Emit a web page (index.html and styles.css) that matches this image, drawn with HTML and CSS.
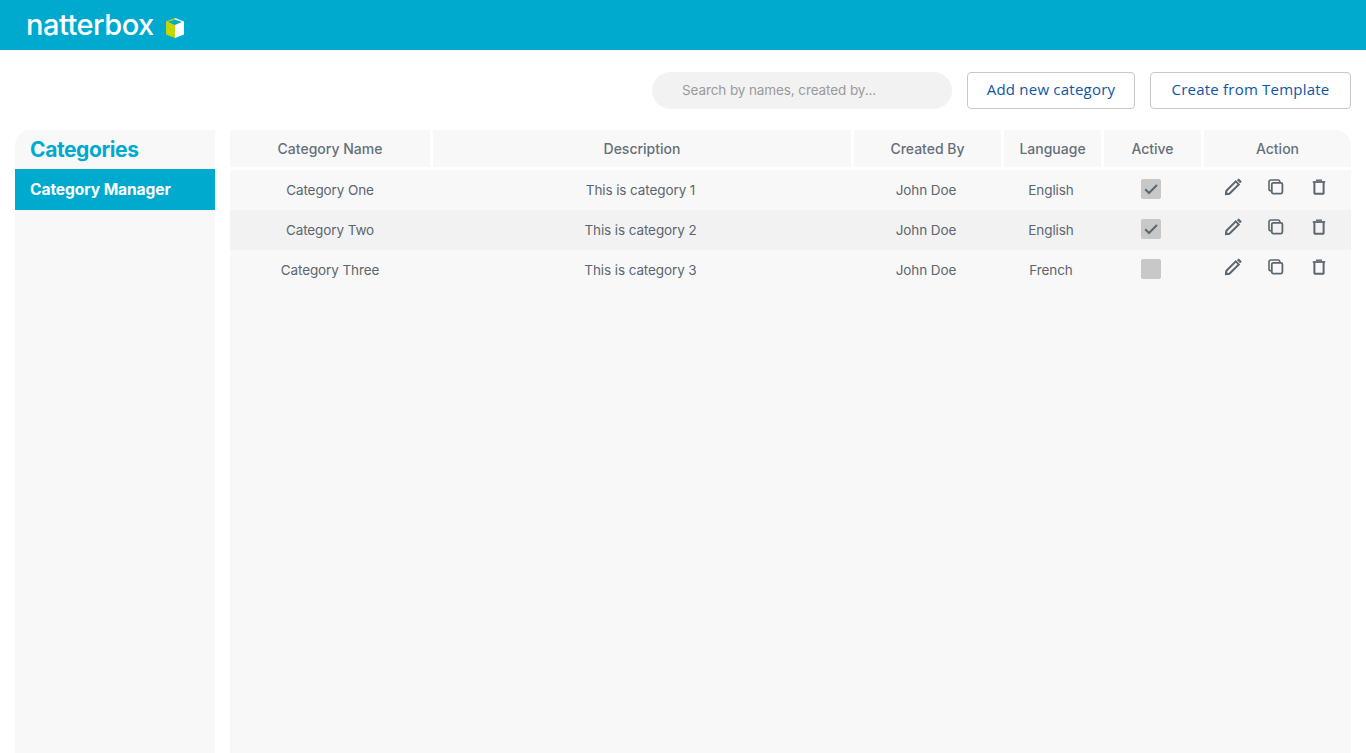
FILE: index.html
```html
<!DOCTYPE html>
<html lang="en">
<head>
    <meta charset="UTF-8">
    <title>Categories</title>
    <link rel="stylesheet" href="styles.css">
</head>
<body>
<svg class="defs" width="0" height="0">
    <symbol id="i-pencil" viewBox="0 0 20 20">
        <path d="M3.400 13.800 12.800 4.400 15.800 7.400 6.400 16.800 3 17.200Z" fill="none" stroke="currentColor" stroke-width="2"/>
        <path d="M14.200 3 15.800 1.800 18.400 4.400 17.200 6Z" fill="currentColor" stroke="currentColor" stroke-width=".6"/>
        <path d="M2.200 18 2.800 14.200 6 17.400Z" fill="currentColor"/>
    </symbol>
    <symbol id="i-copy" viewBox="0 0 20 20">
        <path d="M5.200 13.700H4.800A1.800 1.800 0 0 1 3 11.900V5A2 2 0 0 1 5 3H12A1.800 1.800 0 0 1 13.800 4.800V5.400" fill="none" stroke="currentColor" stroke-width="1.600"/>
        <rect x="5.800" y="5.800" width="10.600" height="10.800" rx="1.500" fill="none" stroke="currentColor" stroke-width="1.800"/>
    </symbol>
    <symbol id="i-trash" viewBox="0 0 20 20">
        <path d="M5.400 5.500V16A.8.800 0 0 0 6.200 16.800H13.800A.8.800 0 0 0 14.600 16V5.500" fill="none" stroke="currentColor" stroke-width="2"/>
        <path d="M3.800 5H16.200" stroke="currentColor" stroke-width="1.800"/>
        <path d="M7 3.200H13" stroke="currentColor" stroke-width="1.400"/>
    </symbol>
</svg>

<header class="topbar">
    <span class="logo-text">natterbox</span>
    <svg class="logo-cube" width="20" height="22" viewBox="0 0 20 22">
        <path d="M1 4.500 10 1V21L1 17.500Z" fill="#c4d600"/>
        <path d="M19 4.500 10 1V21L19 17.500Z" fill="#fff"/>
        <path d="M3 5 10 2.600 17 5 10 8Z" fill="#00aacf"/>
    </svg>
</header>

<div class="toolbar">
    <input class="search" type="text" placeholder="Search by names, created by...">
    <button class="btn btn-add">Add new category</button>
    <button class="btn btn-template">Create from Template</button>
</div>

<main class="content">
    <aside class="sidebar">
        <h2 class="sidebar-title">Categories</h2>
        <a class="sidebar-item">Category Manager</a>
    </aside>

    <section class="grid">
        <div class="row head">
            <div class="cell">Category Name</div>
            <div class="cell">Description</div>
            <div class="cell">Created By</div>
            <div class="cell">Language</div>
            <div class="cell">Active</div>
            <div class="cell">Action</div>
        </div>
        <div class="row">
            <div class="cell">Category One</div>
            <div class="cell">This is category 1</div>
            <div class="cell">John Doe</div>
            <div class="cell">English</div>
            <div class="cell"><span class="check"><svg width="14" height="12" viewBox="0 0 14 12"><path d="M1.200 6.200 5 10 13 2" fill="none" stroke="#5c6670" stroke-width="2"/></svg></span></div>
            <div class="cell actions">
                <svg class="icon"><use href="#i-pencil"/></svg>
                <svg class="icon"><use href="#i-copy"/></svg>
                <svg class="icon"><use href="#i-trash"/></svg>
            </div>
        </div>
        <div class="row alt">
            <div class="cell">Category Two</div>
            <div class="cell">This is category 2</div>
            <div class="cell">John Doe</div>
            <div class="cell">English</div>
            <div class="cell"><span class="check"><svg width="14" height="12" viewBox="0 0 14 12"><path d="M1.200 6.200 5 10 13 2" fill="none" stroke="#5c6670" stroke-width="2"/></svg></span></div>
            <div class="cell actions">
                <svg class="icon"><use href="#i-pencil"/></svg>
                <svg class="icon"><use href="#i-copy"/></svg>
                <svg class="icon"><use href="#i-trash"/></svg>
            </div>
        </div>
        <div class="row">
            <div class="cell">Category Three</div>
            <div class="cell">This is category 3</div>
            <div class="cell">John Doe</div>
            <div class="cell">French</div>
            <div class="cell"><span class="check"></span></div>
            <div class="cell actions">
                <svg class="icon"><use href="#i-pencil"/></svg>
                <svg class="icon"><use href="#i-copy"/></svg>
                <svg class="icon"><use href="#i-trash"/></svg>
            </div>
        </div>
    </section>
</main>
</body>
</html>
```

FILE: styles.css
```css
* {
    box-sizing: border-box;
}

html, body {
    height: 100%;
}

body {
    margin: 0;
    display: flex;
    flex-direction: column;
    overflow: hidden;
    background-color: #fff;
    color: #5c6670;
    font-family: "Inter", "Liberation Sans", sans-serif;
    font-size: 13.5px;
    letter-spacing: -.1px;
}

.defs {
    position: absolute;
}

.topbar {
    display: flex;
    align-items: center;
    flex: none;
    height: 50px;
    padding-left: 26px;
    background-color: #00aacf;
}

.logo-text {
    width: 129px;
    color: #fff;
    font-family: "Inter", sans-serif;
    font-size: 29px;
    font-weight: 500;
    line-height: 50px;
    letter-spacing: -.5px;
}

.logo-cube {
    margin-left: 10px;
    margin-top: 5px;
}

.toolbar {
    display: flex;
    justify-content: flex-end;
    flex: none;
    gap: 15px;
    padding: 22px 15px 21px;
}

.search {
    width: 300px;
    height: 37px;
    padding: 0 30px 2px;
    border: 0;
    border-radius: 19px;
    outline: none;
    background-color: #f3f2f2;
    font-family: "Inter", sans-serif;
    font-size: 13.5px;
    letter-spacing: -.1px;
}

.search::placeholder {
    color: #9a9a9a;
    opacity: 1;
}

.btn {
    height: 37px;
    padding: 0 0 4px;
    border: 1px solid #c8c8c8;
    border-radius: 4px;
    background-color: #fff;
    color: #0d56a6;
    font-family: "Open Sans", sans-serif;
    font-size: 15px;
    letter-spacing: .22px;
}

.btn-add {
    width: 168px;
}

.btn-template {
    width: 201px;
}

.content {
    display: flex;
    flex: 1;
    gap: 15px;
    padding: 0 15px;
    min-height: 0;
}

.sidebar {
    flex: none;
    width: 200px;
    border-top-left-radius: 15px;
    background-color: #f8f8f8;
}

.sidebar-title {
    margin: 0;
    padding: 0 15px;
    height: 39px;
    color: #00aacf;
    font-size: 21px;
    font-weight: 700;
    line-height: 40px;
    letter-spacing: -.4px;
}

.sidebar-item {
    display: block;
    height: 41px;
    padding: 0 15px;
    background-color: #00aacf;
    color: #fff;
    font-size: 15.6px;
    font-weight: 700;
    line-height: 41px;
}

.grid {
    flex: 1;
    background-color: #f8f8f8;
}

.row {
    display: grid;
    grid-template-columns: 200px 421px 150px 100px 100px 150px;
    height: 40px;
}

.row.alt {
    background-color: #f3f2f2;
}

.cell {
    display: flex;
    align-items: center;
    justify-content: center;
}

.head {
    height: 40px;
    padding-bottom: 3px;
    background-color: #fff;
    color: #66707a;
    font-size: 14px;
    font-weight: 500;
    letter-spacing: 0;
}

.head .cell {
    margin-left: 3px;
    background-color: #f8f8f8;
}

.head .cell:first-child {
    margin-left: 0;
}

.head .cell:last-child {
    border-top-right-radius: 15px;
}

.check {
    display: flex;
    align-items: center;
    justify-content: center;
    width: 20px;
    height: 20px;
    margin-bottom: 2px;
    border-radius: 2px;
    background-color: #c8c8c8;
}

.actions {
    gap: 23px;
    padding-bottom: 6px;
}

.icon {
    width: 20px;
    height: 20px;
    color: #5c6670;
}
```
